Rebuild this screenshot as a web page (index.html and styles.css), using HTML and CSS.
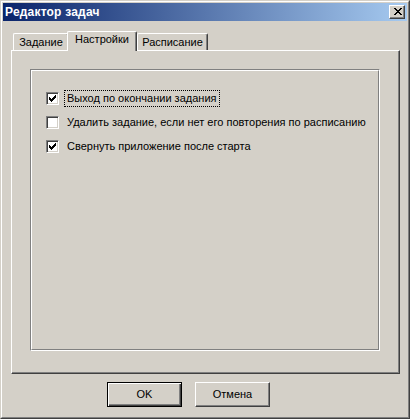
FILE: index.html
```html
<!DOCTYPE html>
<html lang="ru">
<head>
<meta charset="utf-8">
<title>Редактор задач</title>
<link rel="stylesheet" href="styles.css">
</head>
<body>
<div class="window">
  <div class="frame">
    <div class="titlebar">
      <span class="title">Редактор задач</span>
      <button class="close" type="button" aria-label="Закрыть">
        <svg width="8" height="7" viewBox="0 0 8 7" shape-rendering="crispEdges">
          <path fill="#000" d="M0 0h2v1H0zM6 0h2v1H6zM1 1h2v1H1zM5 1h2v1H5zM2 2h4v1H2zM3 3h2v1H3zM2 4h4v1H2zM1 5h2v1H1zM5 5h2v1H5zM0 6h2v1H0zM6 6h2v1H6z"/>
        </svg>
      </button>
    </div>
    <div class="client">
      <div class="tabs">
        <div class="tab tab-1">Задание</div>
        <div class="tab tab-2 active">Настройки</div>
        <div class="tab tab-3">Расписание</div>
      </div>
      <div class="panel">
        <div class="group">
          <div class="group-inner">
            <div class="row">
              <span class="check checked"><svg width="7" height="7" viewBox="0 0 7 7" shape-rendering="crispEdges"><path fill="#000" d="M6 0h1v1H6zM5 1h2v1H5zM0 2h1v1H0zM4 2h3v1H4zM0 3h2v1H0zM3 3h3v1H3zM0 4h5v1H0zM1 5h3v1H1zM2 6h1v1H2z"/></svg></span>
              <span class="label focus">Выход по окончании задания</span>
            </div>
            <div class="row">
              <span class="check"></span>
              <span class="label">Удалить задание, если нет его повторения по расписанию</span>
            </div>
            <div class="row">
              <span class="check checked"><svg width="7" height="7" viewBox="0 0 7 7" shape-rendering="crispEdges"><path fill="#000" d="M6 0h1v1H6zM5 1h2v1H5zM0 2h1v1H0zM4 2h3v1H4zM0 3h2v1H0zM3 3h3v1H3zM0 4h5v1H0zM1 5h3v1H1zM2 6h1v1H2z"/></svg></span>
              <span class="label">Свернуть приложение после старта</span>
            </div>
          </div>
        </div>
      </div>
      <div class="buttons">
        <button class="btn default" type="button"><span class="btn-face">OK</span></button>
        <button class="btn" type="button"><span class="btn-face">Отмена</span></button>
      </div>
    </div>
  </div>
</div>
</body>
</html>
```

FILE: styles.css
```css
* { box-sizing: border-box; }

html, body {
  margin: 0;
  padding: 0;
  background: #D4D0C8;
}

body {
  font-family: "Liberation Sans", Arial, sans-serif;
  font-size: 11px;
  color: #000;
}

.window {
  width: 410px;
  height: 419px;
  border: 1px solid;
  border-color: #D4D0C8 #404040 #404040 #D4D0C8;
  background: #D4D0C8;
}

.frame {
  height: 100%;
  border: 1px solid;
  border-color: #FFFFFF #808080 #808080 #FFFFFF;
  padding: 1px;
  display: flex;
  flex-direction: column;
}

.titlebar {
  height: 18px;
  flex: none;
  display: flex;
  align-items: center;
  justify-content: space-between;
  padding: 0 2px 0 2px;
  background: linear-gradient(to right, #0A246A 0%, #A6CAF0 100%);
}

.title {
  color: #FFFFFF;
  font-family: "Liberation Sans", Arial, sans-serif;
  font-weight: bold;
  font-size: 12px;
  letter-spacing: 0.2px;
  line-height: 18px;
}

.close {
  width: 16px;
  height: 14px;
  padding: 0;
  margin: 0;
  border: 1px solid;
  border-color: #FFFFFF #404040 #404040 #FFFFFF;
  box-shadow: inset -1px -1px 0 #808080;
  background: #D4D0C8;
  display: flex;
  align-items: center;
  justify-content: center;
  padding-left: 1px;
  padding-bottom: 1px;
}

.close svg { display: block; }

.client {
  flex: 1;
  display: flex;
  flex-direction: column;
  padding: 10px 7px 0 8px;
}

.tabs {
  display: flex;
  align-items: flex-end;
  height: 19px;
  padding-left: 2px;
  position: relative;
  z-index: 1;
}

.tab {
  height: 17px;
  border-top: 1px solid #FFFFFF;
  border-left: 1px solid #FFFFFF;
  border-right: 1px solid #404040;
  box-shadow: inset -1px 0 0 #808080;
  border-radius: 2px 2px 0 0;
  background: #D4D0C8;
  line-height: 15px;
  text-align: center;
  white-space: nowrap;
}

.tab-1 { width: 56px; padding-top: 1px; }
.tab-2 { width: 70px; margin-left: -2px; }
.tab-3 { width: 71px; padding-top: 1px; }

.tab.active {
  height: 20px;
  margin-bottom: -1px;
  line-height: 14px;
  position: relative;
  z-index: 2;
  box-shadow: inset -1px 0 0 #808080;
}

.panel {
  height: 324px;
  border: 1px solid;
  border-color: #FFFFFF #404040 #404040 #FFFFFF;
  box-shadow: inset -1px -1px 0 #808080;
  padding: 18px 0 0 18px;
}

.group {
  width: 350px;
  height: 282px;
  border: 1px solid;
  border-color: #808080 #FFFFFF #FFFFFF #808080;
}

.group-inner {
  height: 100%;
  border: 1px solid;
  border-color: #FFFFFF #808080 #808080 #FFFFFF;
  padding: 21px 0 0 14px;
  display: flex;
  flex-direction: column;
  gap: 11px;
}

.row {
  display: flex;
  align-items: center;
  height: 13px;
}

.check {
  width: 13px;
  height: 13px;
  flex: none;
  border: 1px solid;
  border-color: #808080 #FFFFFF #FFFFFF #808080;
  box-shadow: inset 1px 1px 0 #404040, inset -1px -1px 0 #D4D0C8;
  background: #FFFFFF;
  display: flex;
  align-items: center;
  justify-content: center;
}

.check svg { display: block; }

.label {
  margin-left: 5px;
  padding: 1px 2px;
  border: 1px solid transparent;
  white-space: nowrap;
  line-height: 13px;
}

.label.focus {
  border: 1px dotted #000;
}

.buttons {
  display: flex;
  gap: 13px;
  padding: 8px 0 0 96px;
}

.btn {
  width: 75px;
  height: 25px;
  padding: 0;
  margin: 0;
  border: 1px solid;
  border-color: #FFFFFF #404040 #404040 #FFFFFF;
  box-shadow: inset -1px -1px 0 #808080;
  background: #D4D0C8;
  font-family: "Liberation Sans", Arial, sans-serif;
  font-size: 11px;
  color: #000;
}

.btn-face {
  display: block;
  line-height: 21px;
}

.btn.default {
  border: 1px solid #000;
  box-shadow: inset 1px 1px 0 #FFFFFF, inset -1px -1px 0 #404040, inset -2px -2px 0 #808080;
}
```
